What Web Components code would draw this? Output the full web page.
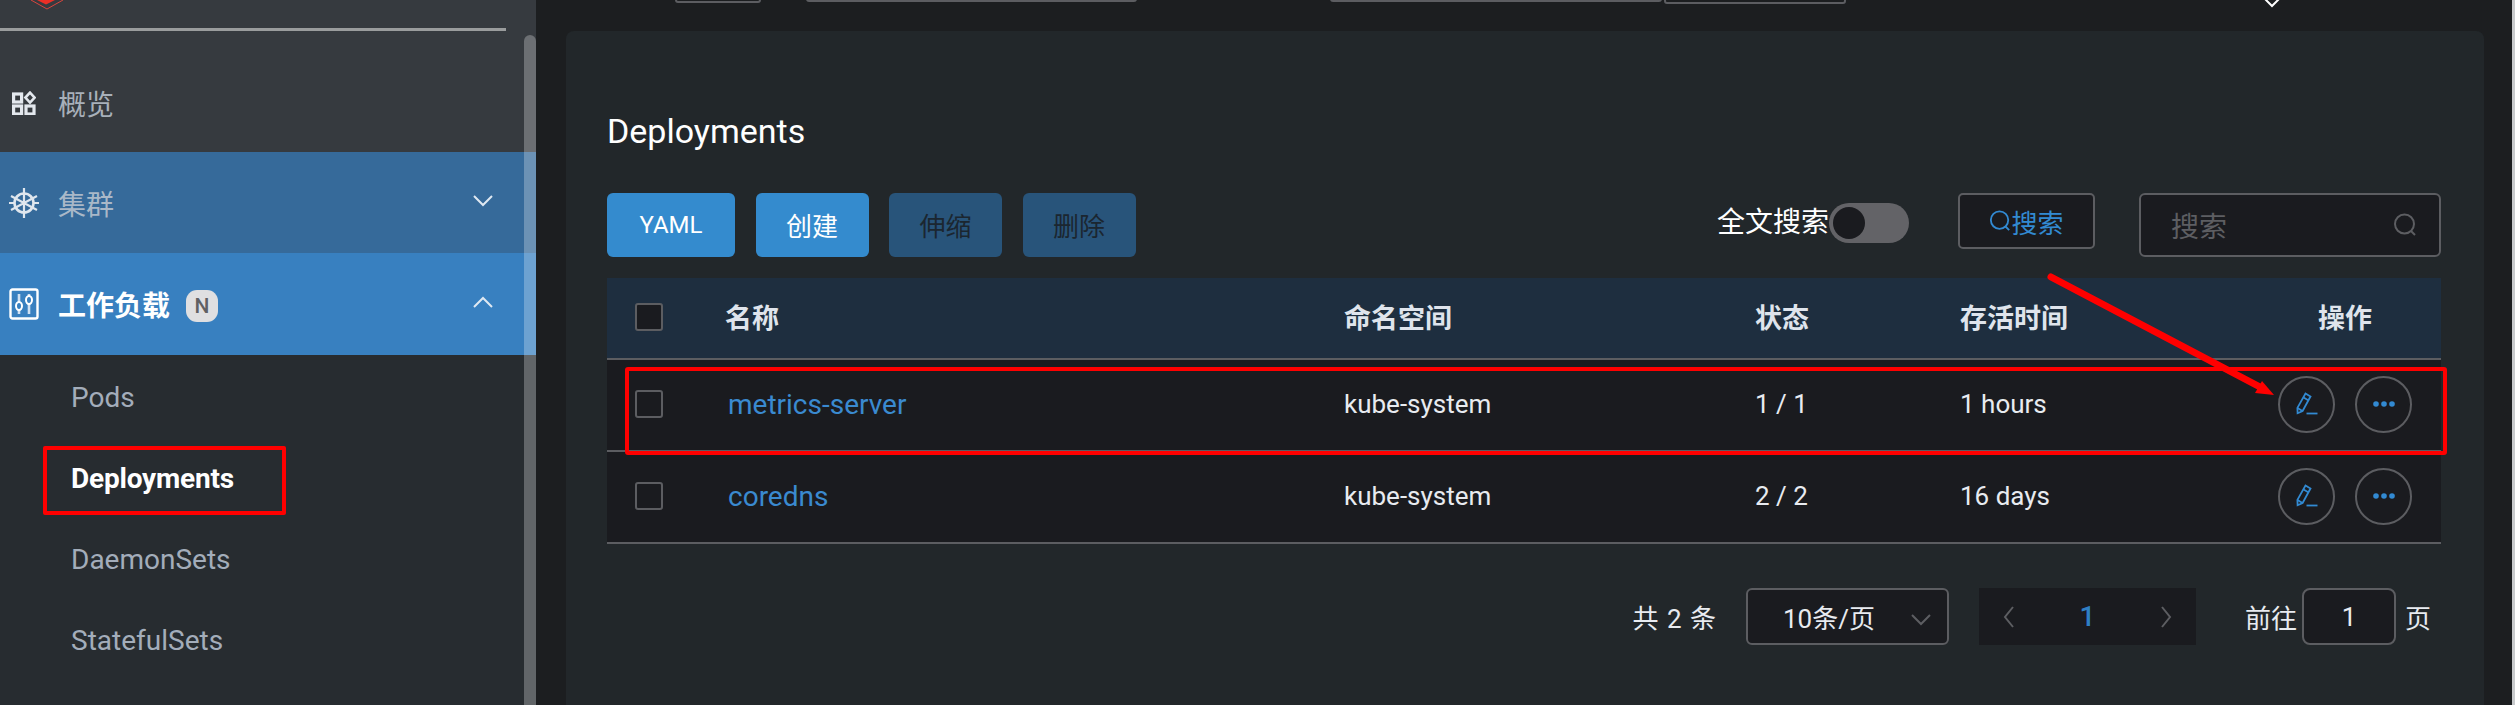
<!DOCTYPE html>
<html lang="zh">
<head>
<meta charset="utf-8">
<title>Deployments</title>
<style>
  html, body { margin: 0; height: 100%; background: #1c1e20; overflow: hidden; }
  body { font-family: Roboto, "Noto Sans CJK SC", sans-serif; color: #e8ebf0; }
</style>
</head>
<body>
<app-shell>
  <side-nav slot="side"></side-nav>
  <top-strip slot="main"></top-strip>
  <deploy-card slot="main"></deploy-card>
</app-shell>

<script>
const FONT = 'Roboto, "Noto Sans CJK SC", sans-serif';

const ICONS = {
  grid: `<svg width="24" height="24" viewBox="0 0 24 24" fill="none" stroke="#e4e8ee" stroke-width="3.2"><rect x="1.6" y="3" width="8" height="8"/><rect x="1.6" y="15" width="8" height="8"/><rect x="14" y="15" width="8" height="8"/><path d="M18 1.6l4.6 5-4.6 5-4.6-5z" stroke-width="2.6"/></svg>`,
  helm: `<svg width="30" height="32" viewBox="0 0 30 32" fill="none" stroke="#dfe6ee" stroke-width="2.6"><circle cx="15" cy="16" r="9.5"/><path d="M15 1v30M2 9l26 14M28 9L2 23" stroke-width="2.2"/><path d="M0 16h5M25 16h5" stroke-width="2"/></svg>`,
  sliders: `<svg width="30" height="32" viewBox="0 0 30 32" fill="none" stroke="#fff"><rect x="1.5" y="1.5" width="27" height="29" rx="2" stroke-width="2.4"/><path d="M10 6v20M20 6v20" stroke="#cfe0f2" stroke-width="2.6"/><ellipse cx="10" cy="18" rx="3" ry="4" fill="#3880c0" stroke="#fff" stroke-width="2"/><ellipse cx="20" cy="12" rx="3" ry="4" fill="#3880c0" stroke="#fff" stroke-width="2"/></svg>`,
  down: `<svg width="20" height="12" viewBox="0 0 20 12" fill="none" stroke="currentColor" stroke-width="2"><path d="M1 1l9 9 9-9"/></svg>`,
  up: `<svg width="20" height="12" viewBox="0 0 20 12" fill="none" stroke="currentColor" stroke-width="2"><path d="M1 11l9-9 9 9"/></svg>`,
  search: `<svg width="24" height="24" viewBox="0 0 24 24" fill="none" stroke="currentColor" stroke-width="2"><circle cx="11.5" cy="11" r="9.5"/><path d="M18 18l4 4"/></svg>`,
  pen: `<svg width="22" height="24" viewBox="0 0 22 24" fill="none" stroke="#328ad2" stroke-width="1.8"><path d="M9.5 1.5l5 3L6.6 19l-5 2.2-.2-5.3z"/><path d="M7.6 5.6l5 3M1.5 16l5 3"/><path d="M10.5 21.5h11"/></svg>`,
  dots: `<svg width="22" height="6" viewBox="0 0 22 6" fill="#328ad2"><circle cx="3" cy="3" r="2.8"/><circle cx="11" cy="3" r="2.8"/><circle cx="19" cy="3" r="2.8"/></svg>`,
};

class AppShell extends HTMLElement {
  constructor() {
    super();
    this.attachShadow({ mode: "open" });
    this.shadowRoot.innerHTML = `
      <style>
        :host { display: flex; width: 2515px; height: 705px; overflow: hidden; position: relative; }
        .side { flex: 0 0 536px; }
        .main { flex: 1; min-width: 0; padding: 0 28px 0 30px; }
        .edge { flex: 0 0 3px; background: #c9cbcd; }
      </style>
      <div class="side"><slot name="side"></slot></div>
      <div class="main"><slot name="main"></slot></div>
      <div class="edge"></div>
    `;
  }
}

class SideNav extends HTMLElement {
  constructor() {
    super();
    this.attachShadow({ mode: "open" });
    this.shadowRoot.innerHTML = `
      <style>
        :host { display: block; height: 705px; position: relative; overflow: hidden;
          background: linear-gradient(#363a3f 0, #363a3f 150px, #272c30 355px, #272c30 100%);
          font-family: ${FONT}; }
        .logo { height: 28px; display: block; }
        .rule { height: 3px; width: 506px; background: #9a9c9d; }
        .bar { position: absolute; right: 0; top: 35px; bottom: 0; width: 12px; border-radius: 6px 6px 0 0;
          background: rgba(255,255,255,.27); }
      </style>
      <div class="logo">
        <svg width="90" height="28" viewBox="0 0 90 28">
          <path d="M31 0L47 9 63 0" fill="none" stroke="#d8453e" stroke-width="1"/>
          <path d="M37 0L46 4.5 55 0z" fill="#ec2f26"/>
        </svg>
      </div>
      <div class="rule"></div>
      <nav-item icon="grid" height="121" pad="22" color="#a8b0ba">概览</nav-item>
      <nav-item icon="helm" height="101" chevron="down" color="#a9b8c8" bg="#366a9a">集群</nav-item>
      <nav-item icon="sliders" height="102" chevron="up" color="#fff" bg="#3880c0" bold badge="N">工作负载</nav-item>
      <nav-sub>Pods</nav-sub>
      <nav-sub active>Deployments</nav-sub>
      <nav-sub>DaemonSets</nav-sub>
      <nav-sub>StatefulSets</nav-sub>
      <div class="bar"></div>
    `;
  }
}

class NavItem extends HTMLElement {
  connectedCallback() {
    if (this.shadowRoot) return;
    this.attachShadow({ mode: "open" });
    const bold = this.hasAttribute("bold");
    const badge = this.getAttribute("badge");
    const chev = this.getAttribute("chevron");
    this.shadowRoot.innerHTML = `
      <style>
        :host { display: flex; align-items: center; box-sizing: border-box;
          height: ${this.getAttribute("height")}px; background: ${this.getAttribute("bg") || "transparent"};
          color: ${this.getAttribute("color")}; padding-left: 9px; padding-top: ${this.getAttribute("pad") || 0}px; position: relative; }
        .ico { flex: 0 0 30px; display: flex; justify-content: center; margin-right: 19px; }
        .txt { font-size: 28px; font-weight: ${bold ? 700 : 400}; }
        .badge { margin-left: 16px; width: 32px; height: 32px; border-radius: 11px; background: #dfdfe1; color: #5f6063;
          font-size: 21px; font-weight: 500; display: flex; align-items: center; justify-content: center; margin-top: 3px; }
        .chev { position: absolute; left: 473px; color: #dfe8f2; display: flex; margin-top: -4px; }
      </style>
      <span class="ico">${ICONS[this.getAttribute("icon")]}</span>
      <span class="txt"><slot></slot></span>
      ${badge ? `<span class="badge">${badge}</span>` : ""}
      ${chev ? `<span class="chev">${ICONS[chev]}</span>` : ""}
    `;
  }
}

class NavSub extends HTMLElement {
  connectedCallback() {
    if (this.shadowRoot) return;
    this.attachShadow({ mode: "open" });
    const active = this.hasAttribute("active");
    this.shadowRoot.innerHTML = `
      <style>
        :host { display: flex; align-items: center; box-sizing: border-box; height: 81px; padding: 3px 0 0 71px; font-size: 28px; position: relative;
          color: ${active ? "#fff" : "#a3adba"}; font-weight: ${active ? 700 : 400}; letter-spacing: ${active ? "-.2px" : "0"}; }
        .mark { position: absolute; left: 43px; top: 10px; width: 235px; height: 61px; border: 4px solid #f00; border-radius: 2px; }
      </style>
      <slot></slot>
      ${active ? '<span class="mark"></span>' : ""}
    `;
  }
}

class TopStrip extends HTMLElement {
  constructor() {
    super();
    this.attachShadow({ mode: "open" });
    this.shadowRoot.innerHTML = `
      <style>
        :host { display: block; height: 31px; position: relative; }
        .b { position: absolute; height: 10px; border: 2px solid #5c5d61; border-radius: 3px; }
        .tip { position: absolute; left: 1696px; top: 0; }
      </style>
      <div class="b" style="left:109px;top:-11px;width:82px"></div>
      <div class="b" style="left:240px;top:-12px;width:327px"></div>
      <div class="b" style="left:764px;top:-12px;width:328px"></div>
      <div class="b" style="left:1098px;top:-10px;width:178px"></div>
      <svg class="tip" width="20" height="8" viewBox="0 0 20 8" fill="none" stroke="#fff" stroke-width="2"><path d="M2-2l8 8 8-8"/></svg>
    `;
  }
}

class DeployCard extends HTMLElement {
  constructor() {
    super();
    this.attachShadow({ mode: "open" });
    this.shadowRoot.innerHTML = `
      <style>
        :host { display: block; box-sizing: border-box; height: 674px; background: #22272a; border-radius: 8px 8px 0 0;
          padding: 76px 43px 0 41px; position: relative; font-family: ${FONT}; }
        h1 { margin: 0; font-size: 34px; font-weight: 400; line-height: 48px; color: #fff; }
        .tools { display: flex; align-items: flex-start; height: 64px; margin-top: 38px; }
        .btns { display: flex; gap: 20.5px; }
        .right { margin-left: auto; display: flex; align-items: flex-start; }
        .lab { font-size: 28px; line-height: 40px; margin-top: 10px; color: #fff; }
        .switch { width: 80px; height: 40px; margin-top: 10px; border-radius: 20px; background: #636367; position: relative; }
        .thumb { position: absolute; left: 4px; top: 4px; width: 32px; height: 32px; border-radius: 50%; background: #1a1b1f; }
        .sbtn { box-sizing: border-box; width: 137px; height: 56px; margin-left: 49px; border: 2px solid #5c5d61; border-radius: 5px;
          background: #1a1b1f; color: #328ad2; display: flex; align-items: center; justify-content: center; font-size: 26px; }
        .sbtn svg { width: 22px; height: 26px; }
        .input { box-sizing: border-box; width: 302px; height: 64px; margin-left: 44px; border: 2px solid #5c5d61; border-radius: 6px;
          background: #1a1b1f; color: #5d5e62; display: flex; align-items: center; justify-content: space-between;
          padding: 0 22px 0 30px; font-size: 28px; }
        .input svg { color: #5d5e62; }
        .table { margin-top: 21px; }
        .foot { display: flex; align-items: center; height: 57px; margin-top: 44px; font-size: 26px; color: #e8ebf0; }
        .foot .total { margin-left: auto; word-spacing: 2px; }
        .sel { box-sizing: border-box; width: 203px; height: 57px; margin-left: 30px; border: 2px solid #5c5d61; border-radius: 6px;
          background: #1a1b1f; display: flex; align-items: center; padding-left: 35px; position: relative; }
        .sel svg { position: absolute; right: 16px; top: 24px; color: #5d5e62; }
        .pager { width: 217px; height: 57px; margin-left: 30px; background: #1a1b1f; display: flex; align-items: center;
          justify-content: space-between; padding: 0 24px; box-sizing: border-box; color: #5d5e62; }
        .pager b { font-weight: 500; color: #2f7fc4; font-size: 28px; }
        .goto { margin-left: 49px; }
        .jump { box-sizing: border-box; width: 94px; height: 57px; margin: 0 9px 0 5px; border: 2px solid #5c5d61; border-radius: 8px;
          background: #1a1b1f; display: flex; align-items: center; justify-content: center; }
        .foot .end { margin-right: 10px; }
      </style>
      <h1>Deployments</h1>
      <div class="tools">
        <div class="btns">
          <ui-button width="128" size="24">YAML</ui-button>
          <ui-button width="113" lift>创建</ui-button>
          <ui-button width="113" lift disabled>伸缩</ui-button>
          <ui-button width="113" lift disabled>删除</ui-button>
        </div>
        <div class="right">
          <span class="lab">全文搜索</span>
          <span class="switch"><span class="thumb"></span></span>
          <span class="sbtn">${ICONS.search}搜索</span>
          <span class="input">搜索${ICONS.search}</span>
        </div>
      </div>
      <deploy-table class="table">
        <deploy-row name="metrics-server" ns="kube-system" status="1 / 1" age="1 hours"></deploy-row>
        <deploy-row name="coredns" ns="kube-system" status="2 / 2" age="16 days"></deploy-row>
      </deploy-table>
      <div class="foot">
        <span class="total">共 2 条</span>
        <span class="sel">10条/页${ICONS.down}</span>
        <span class="pager">
          <svg width="12" height="22" viewBox="0 0 12 22" fill="none" stroke="currentColor" stroke-width="2"><path d="M10 1L2 11l8 10"/></svg>
          <b>1</b>
          <svg width="12" height="22" viewBox="0 0 12 22" fill="none" stroke="currentColor" stroke-width="2"><path d="M2 1l8 10-8 10"/></svg>
        </span>
        <span class="goto">前往</span>
        <span class="jump">1</span>
        <span class="end">页</span>
      </div>
      <svg style="position:absolute;left:0;top:0;pointer-events:none" width="1918" height="500" fill="none">
        <rect x="61" y="338" width="1818" height="84" stroke="#f00" stroke-width="4" rx="1"/>
        <path d="M1485 246L1694 356" stroke="#f00" stroke-width="7" stroke-linecap="round"/>
        <path d="M1708 364l-19-2 7-12z" fill="#f00"/>
      </svg>
    `;
  }
}

class UiButton extends HTMLElement {
  connectedCallback() {
    if (this.shadowRoot) return;
    this.attachShadow({ mode: "open" });
    const off = this.hasAttribute("disabled");
    this.shadowRoot.innerHTML = `
      <style>
        :host { display: flex; align-items: center; justify-content: center; box-sizing: border-box; height: 64px; width: ${this.getAttribute("width")}px;
          padding-bottom: ${this.hasAttribute("lift") ? 2 : 0}px;
          border-radius: 6px; font-size: ${this.getAttribute("size") || 26}px; background: ${off ? "#28547a" : "#348bce"}; color: ${off ? "#1b2630" : "#fff"}; }
      </style>
      <slot></slot>
    `;
  }
}

const COLS = "grid-template-columns: 118px 619px 411px 205px 358px 123px;";

class DeployTable extends HTMLElement {
  constructor() {
    super();
    this.attachShadow({ mode: "open" });
    this.shadowRoot.innerHTML = `
      <style>
        :host { display: block; font-family: ${FONT}; }
        .head { display: grid; ${COLS} align-items: center; box-sizing: border-box; height: 82px; padding-bottom: 2px; background: #1e2e3f; border-bottom: 2px solid #5c5d61;
          font-size: 27px; font-weight: 700; color: #dfe4ec; }
        .head span:not(.chk) { margin-bottom: 2px; }
        .chk { box-sizing: border-box; width: 28px; height: 28px; margin-left: 28px; border: 2px solid #5c5d61; border-radius: 3px; background: #1a1b1f; }
      </style>
      <div class="head">
        <span class="chk"></span><span>名称</span><span>命名空间</span><span>状态</span><span>存活时间</span><span>操作</span>
      </div>
      <slot></slot>
    `;
  }
}

class DeployRow extends HTMLElement {
  connectedCallback() {
    if (this.shadowRoot) return;
    this.attachShadow({ mode: "open" });
    const a = (n) => this.getAttribute(n);
    this.shadowRoot.innerHTML = `
      <style>
        :host { display: grid; ${COLS} align-items: center; height: 92px; box-sizing: border-box; padding-bottom: 2px; background: #1a1b1f;
          border-bottom: 2px solid #5c5d61; font-size: 26px; color: #e8ebf0; }
        .chk { box-sizing: border-box; width: 28px; height: 28px; margin-left: 28px; border: 2px solid #5c5d61; border-radius: 3px; background: #1a1b1f; }
        .name { color: #3a8ad0; font-size: 28px; margin-left: 3px; }
        .ops { display: flex; gap: 20px; margin-left: -40px; }
        .op { box-sizing: border-box; width: 57px; height: 57px; border: 2px solid #5c5d61; border-radius: 50%;
          display: flex; align-items: center; justify-content: center; }
      </style>
      <span class="chk"></span>
      <span class="name">${a("name")}</span>
      <span>${a("ns")}</span>
      <span>${a("status")}</span>
      <span>${a("age")}</span>
      <span class="ops"><span class="op">${ICONS.pen}</span><span class="op">${ICONS.dots}</span></span>
    `;
  }
}

customElements.define("app-shell", AppShell);
customElements.define("side-nav", SideNav);
customElements.define("nav-item", NavItem);
customElements.define("nav-sub", NavSub);
customElements.define("top-strip", TopStrip);
customElements.define("deploy-card", DeployCard);
customElements.define("ui-button", UiButton);
customElements.define("deploy-table", DeployTable);
customElements.define("deploy-row", DeployRow);
</script>
</body>
</html>
